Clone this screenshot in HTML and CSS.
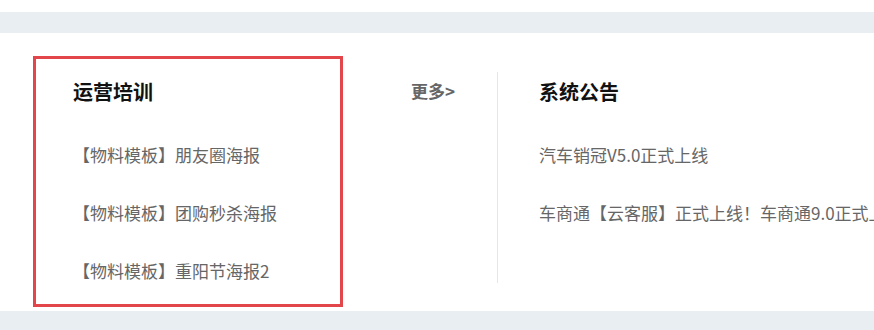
FILE: index.html
```html
<!DOCTYPE html>
<html lang="zh">
<head>
<meta charset="utf-8">
<link rel="stylesheet" href="styles.css">
</head>
<body>
<div class="band band-top"></div>
<main class="main">
  <section class="box">
    <h2 class="title">运营培训</h2>
    <ul class="list">
      <li>【物料模板】朋友圈海报</li>
      <li>【物料模板】团购秒杀海报</li>
      <li>【物料模板】重阳节海报2</li>
    </ul>
  </section>
  <a class="more">更多&gt;</a>
  <div class="divider"></div>
  <section class="notice">
    <h2 class="title">系统公告</h2>
    <ul class="list">
      <li>汽车销冠V5.0正式上线</li>
      <li>车商通【云客服】正式上线！车商通9.0正式上线</li>
    </ul>
  </section>
</main>
<div class="band band-bottom"></div>
</body>
</html>
```
FILE: styles.css
```css
html, body {
  margin: 0;
  padding: 0;
  background: #fff;
  font-family: "Noto Sans CJK SC", "Noto Sans", sans-serif;
  overflow: hidden;
}
.band {
  background: #e9eef2;
}
.band-top {
  margin-top: 12px;
  height: 21px;
}
.band-bottom {
  height: 19px;
}
.main {
  height: 278px;
  display: flex;
  align-items: flex-start;
  padding: 23px 0 0 33px;
  box-sizing: border-box;
  white-space: nowrap;
  overflow: hidden;
}
.box {
  flex: none;
  width: 310px;
  height: 251px;
  box-sizing: border-box;
  border: 3px solid #e2464b;
  padding: 21px 0 0 37px;
}
.title {
  margin: 0;
  font-size: 20px;
  line-height: 24px;
  font-weight: 700;
  color: #111;
}
.list {
  list-style: none;
  margin: 22px 0 0;
  padding: 0;
  font-size: 17px;
  line-height: 58px;
  color: #666;
}
.more {
  flex: none;
  width: 86px;
  margin: 23px 0 0 68px;
  font-size: 17px;
  line-height: 24px;
  font-weight: 700;
  color: #666;
}
.divider {
  flex: none;
  width: 1px;
  height: 211px;
  margin-top: 16px;
  background: #e6e6e6;
}
.notice {
  flex: none;
  padding: 24px 0 0 41px;
}
```
